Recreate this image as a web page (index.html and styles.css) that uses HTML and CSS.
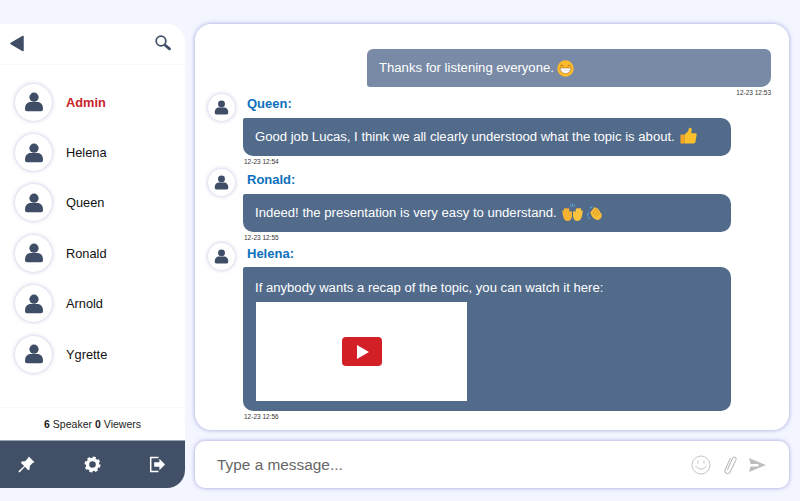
FILE: index.html
```html
<!DOCTYPE html>
<html lang="en">
<head>
    <meta charset="UTF-8">
    <meta name="viewport" content="width=device-width, initial-scale=1.0">
    <title>Chat room</title>
    <link rel="stylesheet" href="styles.css">
</head>
<body>
    <svg class="defs" width="0" height="0">
        <symbol id="person" viewBox="0 0 20 20">
            <circle cx="10" cy="5.200" r="4.600"/>
            <path d="M1 17c0-5 2.600-7 5.500-7h7c2.900 0 5.500 2 5.500 7 0 1.500-.8 2.200-2 2.200H3c-1.200 0-2-.7-2-2.200z"/>
        </symbol>
    </svg>

    <div class="app">
        <aside class="sidebar">
            <div class="side-top">
                <svg class="icon-back" viewBox="0 0 14 16"><path d="M13 1v14L1 8z" fill="#3f4e66" stroke="#3f4e66" stroke-width="1.500" stroke-linejoin="round"/></svg>
                <svg class="icon-search" viewBox="0 0 16 16"><circle cx="6" cy="6" r="4.800" fill="none" stroke="#3f4e66" stroke-width="1.700"/><path d="M10.500 10.500l4 3.300" stroke="#3f4e66" stroke-width="2.800" stroke-linecap="round"/></svg>
            </div>
            <ul class="users">
                <li class="user admin"><span class="avatar"><svg><use href="#person"/></svg></span>Admin</li>
                <li class="user"><span class="avatar"><svg><use href="#person"/></svg></span>Helena</li>
                <li class="user"><span class="avatar"><svg><use href="#person"/></svg></span>Queen</li>
                <li class="user"><span class="avatar"><svg><use href="#person"/></svg></span>Ronald</li>
                <li class="user"><span class="avatar"><svg><use href="#person"/></svg></span>Arnold</li>
                <li class="user"><span class="avatar"><svg><use href="#person"/></svg></span>Ygrette</li>
            </ul>
            <div class="count"><b>6</b> Speaker <b>0</b> Viewers</div>
            <div class="toolbar">
                <svg viewBox="0 0 18 18" class="tool"><path d="M11.500 .5L17.500 6.500 15.500 7.500 12.500 10.500 12.300 14 10.800 15 7.300 11.500 2 17.300 .7 17.300 .7 16 6.500 10.700 3 7.200 4 5.700 7.500 5.500 10.500 2.500z" fill="#fff"/></svg>
                <svg viewBox="0 0 18 18" class="tool"><circle cx="9" cy="9" r="5.300" fill="none" stroke="#fff" stroke-width="3.600"/><circle cx="9" cy="9" r="7.400" fill="none" stroke="#fff" stroke-width="2.200" stroke-dasharray="3.200 2.610"/></svg>
                <svg viewBox="0 0 18 18" class="tool"><path d="M10 1.500H1.800v15H10" fill="none" stroke="#fff" stroke-width="1.600"/><path d="M5.500 6.500h5.500V3l6 6-6 6v-3.500H5.500z" fill="#fff"/></svg>
            </div>
        </aside>

        <main class="main">
            <section class="chat">
                <div class="mine">
                    <div class="bubble bubble-mine">Thanks for listening everyone.
                        <svg class="emoji" viewBox="0 0 18 18"><circle cx="9" cy="9" r="8.700" fill="#fbb92b"/><path d="M3.600 6.300q1.700-1.800 3.200 0M11.200 6.300q1.500-1.800 3.200 0" fill="none" stroke="#a8701a" stroke-width="1"/><path d="M3.200 8.400h11.600c0 3.600-2.400 5.900-5.800 5.900s-5.800-2.300-5.800-5.900z" fill="#fff" stroke="#a8701a" stroke-width=".7"/><path d="M3.600 11h10.800" stroke="#c9c9c9" stroke-width=".6"/></svg>
                    </div>
                    <div class="time">12-23 12:53</div>
                </div>

                <div class="msg msg-queen">
                    <div class="msg-head"><span class="avatar small"><svg><use href="#person"/></svg></span><span class="name">Queen:</span></div>
                    <div class="bubble">Good job Lucas, I think we all clearly understood what the topic is about.
                        <svg class="emoji thumb" viewBox="0 0 18 18"><path d="M.5 8h4.500v9.500H.5z" fill="#f5a623"/><path d="M5 8l3.500-3.500L9.800.8c2-.4 2.900 1 2.600 2.700L11.800 6.500h4.400c1.400 0 1.800 1.400 1.300 2.500l-1.200 7c-.3 1-1 1.500-2 1.500H5z" fill="#fcc02c"/></svg>
                    </div>
                    <div class="time">12-23 12:54</div>
                </div>

                <div class="msg msg-ronald">
                    <div class="msg-head"><span class="avatar small"><svg><use href="#person"/></svg></span><span class="name">Ronald:</span></div>
                    <div class="bubble">Indeed! the presentation is very easy to understand.
                        <svg class="hands" viewBox="0 0 21 18"><path d="M8.500 1.500l.5 2.500M10.500 0v3.500M12.500 1.500L12 4" stroke="#58a6dc" stroke-width=".9"/><path d="M.3 8.500C.2 7 1.600 6.800 2 8V6C2 4.600 3.500 4.600 3.700 6 3.800 4.500 5.400 4.500 5.500 6 5.800 4.800 7.200 5 7.200 6.200L7.600 9 8.800 8C10 8 10 9.500 10 10.500V13C9.800 16 8 18 5.500 18 2 18 1 14 .3 8.500z" fill="#f6b332"/><path d="M20.700 8.500C20.800 7 19.400 6.800 19 8V6C19 4.600 17.500 4.600 17.300 6 17.200 4.500 15.600 4.500 15.500 6 15.200 4.800 13.800 5 13.800 6.200L13.400 9 12.200 8C11 8 11 9.500 11 10.500V13C11.200 16 13 18 15.500 18 19 18 20 14 20.700 8.500z" fill="#fcc43e"/></svg>
                        <svg class="clap" viewBox="0 0 16 15"><path d="M.6 11Q.3 8.500 1.800 7M3 13.500Q1.500 12.800 1 11.800M3 2.500Q4.200 1 6 .7" fill="none" stroke="#58a6dc" stroke-width="1.100"/><path d="M3.500 7L7.500 1.800C8.500 .8 10 1.600 9.800 2.800 11 2 12.500 3 12 4.400 13.200 4.300 14.300 5.500 13.800 6.800 15.500 7.500 16 9.500 15.700 11 15 14 12.500 15.300 10 14.800 7 14 4.500 11 3.500 7z" fill="#f9bd38"/><path d="M6 8.500L9.800 3.200M8 10L12 4.800M10 11.300L13.800 6.800" stroke="#c98516" stroke-width=".7"/></svg>
                    </div>
                    <div class="time">12-23 12:55</div>
                </div>

                <div class="msg msg-helena">
                    <div class="msg-head"><span class="avatar small"><svg><use href="#person"/></svg></span><span class="name">Helena:</span></div>
                    <div class="bubble bubble-video">
                        <div>If anybody wants a recap of the topic, you can watch it here:</div>
                        <div class="video"><span class="play"><span class="play-tri"></span></span></div>
                    </div>
                    <div class="time">12-23 12:56</div>
                </div>
            </section>

            <form class="composer">
                <span class="placeholder">Type a message...</span>
                <div class="composer-icons">
                    <svg class="ci-smile" viewBox="0 0 20 20"><circle cx="10" cy="10" r="9" fill="none" stroke="#c4c4c4" stroke-width="1"/><path d="M7 5.500v3M13 5.500v3" stroke="#c4c4c4" stroke-width="1"/><path d="M4.500 11q5.500 6.500 11 0" fill="none" stroke="#c4c4c4" stroke-width="1"/></svg>
                    <svg class="ci-clip" viewBox="0 0 14 20"><path d="M4.500 14.500L9.500 3.500C10.500 1 14 2.200 12.900 5L7 17C5.500 20 1 18 2 15L7.500 3" fill="none" stroke="#bdbdbd" stroke-width="1.100"/></svg>
                    <svg class="ci-send" viewBox="0 0 18 15"><path d="M0 0l18 7.500L0 15l1.500-6H10V6.500H1.500z" fill="#bdbdbd"/></svg>
                </div>
            </form>
        </main>
    </div>
</body>
</html>
```

FILE: styles.css
```css
* {
    margin: 0;
    padding: 0;
    box-sizing: border-box;
}
body {
    font-family: 'Liberation Sans', Arial, sans-serif;
    background-color: #f3f6ff;
    height: 501px;
    overflow: hidden;
}
.defs {
    display: block;
    height: 0;
}
.app {
    display: grid;
    grid-template-columns: 185px 594px;
    gap: 10px;
    height: 501px;
    padding-top: 24px;
    padding-bottom: 13px;
}

/* sidebar */
.sidebar {
    background-color: #fff;
    border-radius: 0 18px 18px 0;
    display: flex;
    flex-direction: column;
    overflow: hidden;
}
.side-top {
    height: 41px;
    flex-shrink: 0;
    display: flex;
    align-items: center;
    justify-content: space-between;
    padding: 0 14px 2px 10px;
    border-bottom: 1px solid #f6f7fb;
}
.icon-back {
    width: 14px;
    height: 17px;
}
.icon-search {
    width: 16px;
    height: 16px;
}
.users {
    list-style: none;
    flex: 1;
    padding-top: 12px;
}
.user {
    height: 50.4px;
    display: flex;
    align-items: center;
    gap: 14px;
    padding-left: 15px;
    font-size: 12.800px;
    color: #111;
}
.admin {
    color: #c9242b;
    font-weight: bold;
}
.avatar {
    width: 37px;
    height: 37px;
    flex-shrink: 0;
    border-radius: 50%;
    background-color: #fff;
    box-shadow: 0 0 4px rgba(110, 110, 190, 0.45);
    display: flex;
    align-items: center;
    justify-content: center;
}
.avatar svg {
    width: 20px;
    height: 20px;
    fill: #3f4e66;
}
.avatar.small {
    width: 27px;
    height: 27px;
}
.avatar.small svg {
    width: 15px;
    height: 15px;
}
.count {
    height: 33px;
    flex-shrink: 0;
    border-top: 1px solid #f8f9fc;
    display: flex;
    align-items: center;
    justify-content: center;
    gap: 3px;
    font-size: 10.500px;
    color: #222;
}
.toolbar {
    height: 48px;
    flex-shrink: 0;
    background-color: #414f67;
    border-top: 1px solid #9aa3b2;
    display: flex;
    align-items: center;
    justify-content: space-between;
    padding: 0 19px 0 18px;
}
.tool {
    width: 17px;
    height: 17px;
}

/* chat */
.main {
    display: flex;
    flex-direction: column;
    gap: 11px;
}
.chat {
    height: 406px;
    background-color: #fff;
    border-radius: 16px;
    box-shadow: 0 0 4px rgba(100, 100, 190, 0.6);
    padding: 25px 18px 0 13px;
}
.mine {
    display: flex;
    flex-direction: column;
    align-items: flex-end;
}
.bubble {
    background-color: #526b8b;
    color: #fff;
    font-size: 13.120px;
    line-height: 16px;
    border-radius: 2px 10px 10px 10px;
    padding: 11px 12px;
    width: 488px;
    height: 38px;
    margin-left: 35px;
    display: flex;
    align-items: center;
    gap: 5px;
}
.bubble-mine {
    background-color: #788aa5;
    width: 404px;
    margin-left: 0;
    border-radius: 6px 6px 10px 3px;
    gap: 3px;
}
.bubble-video {
    display: block;
    height: 144px;
    padding-top: 13px;
}
.time {
    font-size: 6.500px;
    line-height: 9px;
    margin-top: 1px;
    color: #333;
}
.msg .time {
    margin-left: 36px;
}
.msg-head {
    display: flex;
    align-items: flex-start;
    gap: 12px;
    height: 25px;
}
.name {
    font-size: 13px;
    font-weight: bold;
    color: #0d70bd;
    line-height: 16px;
    margin-top: 3px;
}
.msg-queen {
    margin-top: -3px;
}
.msg-queen .msg-head {
    height: 24px;
}
.msg-queen .name {
    margin-top: 2px;
}
.msg-ronald {
    padding-top: 3px;
}
.msg-helena {
    padding-top: 1px;
}
.msg-helena .msg-head {
    height: 24px;
}
.emoji {
    width: 17px;
    height: 17px;
    flex-shrink: 0;
}
.thumb {
    margin-top: -4px;
}
.hands {
    width: 21px;
    height: 18px;
    flex-shrink: 0;
    margin-top: -2px;
}
.clap {
    width: 15px;
    height: 14px;
    flex-shrink: 0;
    margin-left: -1px;
}
.video {
    width: 211px;
    height: 99px;
    margin-top: 6px;
    margin-left: 1px;
    background-color: #fff;
    display: flex;
    align-items: center;
    justify-content: center;
}
.play {
    width: 40px;
    height: 29px;
    background-color: #d22026;
    border-radius: 4px;
    display: flex;
    align-items: center;
    justify-content: center;
}
.play-tri {
    width: 0;
    height: 0;
    border-left: 12px solid #fff;
    border-top: 7px solid transparent;
    border-bottom: 7px solid transparent;
    margin-left: 2px;
}

/* composer */
.composer {
    height: 47px;
    background-color: #fff;
    border-radius: 10px;
    box-shadow: 0 0 4px rgba(100, 100, 190, 0.6);
    display: flex;
    align-items: center;
    justify-content: space-between;
    padding: 0 23px 0 22px;
}
.placeholder {
    font-size: 15.400px;
    color: #666;
}
.composer-icons {
    display: flex;
    align-items: center;
    gap: 12px;
}
.ci-smile {
    width: 20px;
    height: 20px;
}
.ci-clip {
    width: 14px;
    height: 20px;
}
.ci-send {
    width: 17px;
    height: 14px;
}
```
